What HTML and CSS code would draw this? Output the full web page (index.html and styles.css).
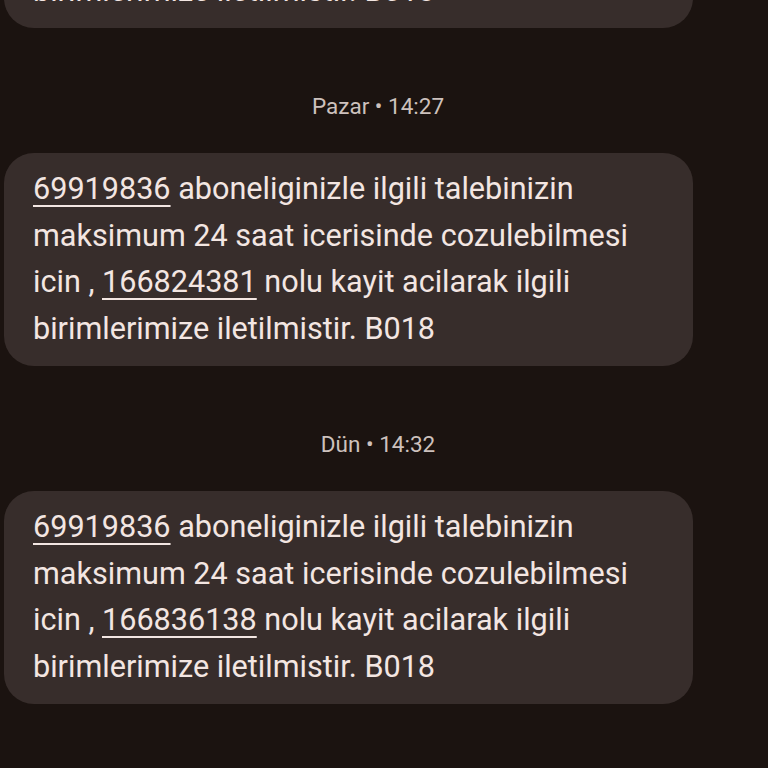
FILE: index.html
```html
<!DOCTYPE html>
<html lang="tr">
<head>
<meta charset="utf-8">
<link rel="stylesheet" href="styles.css">
</head>
<body>
<div class="thread">
  <div class="bubble first">
    <p class="msg"><span class="num">69919836</span> aboneliginizle ilgili talebinizin<br>maksimum 24 saat icerisinde cozulebilmesi<br>icin , <span class="num">166811902</span> nolu kayit acilarak ilgili<br>birimlerimize iletilmistir. B018</p>
  </div>
  <div class="stamp">Pazar • 14:27</div>
  <div class="bubble">
    <p class="msg"><span class="num">69919836</span> aboneliginizle ilgili talebinizin<br>maksimum 24 saat icerisinde cozulebilmesi<br>icin , <span class="num">166824381</span> nolu kayit acilarak ilgili<br>birimlerimize iletilmistir. B018</p>
  </div>
  <div class="stamp">Dün • 14:32</div>
  <div class="bubble">
    <p class="msg"><span class="num">69919836</span> aboneliginizle ilgili talebinizin<br>maksimum 24 saat icerisinde cozulebilmesi<br>icin , <span class="num">166836138</span> nolu kayit acilarak ilgili<br>birimlerimize iletilmistir. B018</p>
  </div>
</div>
</body>
</html>
```
FILE: styles.css
```css
html, body {
  margin: 0;
  padding: 0;
  background: #1b1310;
  height: 768px;
  overflow: hidden;
}
.thread {
  display: flex;
  flex-direction: column;
  font-family: Roboto, "Noto Sans", sans-serif;
}
.bubble {
  margin-left: 4px;
  width: 689px;
  height: 213px;
  box-sizing: border-box;
  padding: 13px 20px 0 29px;
  background: #372d2b;
  border-radius: 30px;
}
.bubble.first {
  margin-top: -185px;
}
.msg {
  margin: 0;
  font-size: 30.6px;
  line-height: 46.5px;
  color: #f3e6e2;
  white-space: nowrap;
}
.num {
  text-decoration: underline;
  text-decoration-thickness: 2px;
  text-underline-offset: 6px;
}
.stamp {
  margin-top: 65px;
  margin-bottom: 34px;
  height: 26px;
  line-height: 26px;
  padding-right: 12px;
  text-align: center;
  font-size: 22.5px;
  color: #cdc1bd;
}
```
